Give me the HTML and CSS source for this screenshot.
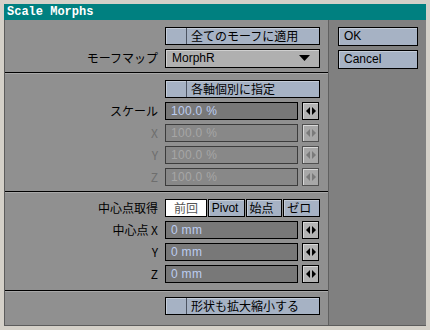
FILE: index.html
```html
<!DOCTYPE html>
<html lang="ja">
<head>
  <meta charset="UTF-8"/>
  <title>Scale Morphs</title>
  <link rel="stylesheet" href="styles.css">
</head>
<body>
  <div class="window">
    <div class="titlebar">Scale Morphs</div>
    <div class="body">
      <!-- Hauptbereich -->
      <div class="main">
        <div class="group g1">
          <div class="row">
            <span class="label"></span>
            <div class="btn check"><span class="box"></span><span class="txt">全てのモーフに適用</span></div>
          </div>
          <div class="row">
            <span class="label">モーフマップ</span>
            <div class="select">
              <span>MorphR</span>
              <svg width="11" height="6" viewBox="0 0 11 6"><polygon points="0,0 11,0 5.5,6" fill="#000"/></svg>
            </div>
          </div>
        </div>

        <div class="group g2">
          <div class="row">
            <span class="label"></span>
            <div class="btn check"><span class="box"></span><span class="txt">各軸個別に指定</span></div>
          </div>
          <div class="row">
            <span class="label">スケール</span>
            <div class="field">100.0 %</div>
            <div class="arrows"><svg width="10" height="8" viewBox="0 0 10 8"><polygon points="4,0 0,4 4,8" /><polygon points="6,0 10,4 6,8" /></svg></div>
          </div>
          <div class="row off">
            <span class="label">X</span>
            <div class="field">100.0 %</div>
            <div class="arrows"><svg width="10" height="8" viewBox="0 0 10 8"><polygon points="4,0 0,4 4,8" /><polygon points="6,0 10,4 6,8" /></svg></div>
          </div>
          <div class="row off">
            <span class="label">Y</span>
            <div class="field">100.0 %</div>
            <div class="arrows"><svg width="10" height="8" viewBox="0 0 10 8"><polygon points="4,0 0,4 4,8" /><polygon points="6,0 10,4 6,8" /></svg></div>
          </div>
          <div class="row off">
            <span class="label">Z</span>
            <div class="field">100.0 %</div>
            <div class="arrows"><svg width="10" height="8" viewBox="0 0 10 8"><polygon points="4,0 0,4 4,8" /><polygon points="6,0 10,4 6,8" /></svg></div>
          </div>
        </div>

        <div class="group g3">
          <div class="row">
            <span class="label">中心点取得</span>
            <div class="segs">
              <span class="seg on">前回</span>
              <span class="seg">Pivot</span>
              <span class="seg">始点</span>
              <span class="seg">ゼロ</span>
            </div>
          </div>
          <div class="row">
            <span class="label">中心点 X</span>
            <div class="field">0 mm</div>
            <div class="arrows"><svg width="10" height="8" viewBox="0 0 10 8"><polygon points="4,0 0,4 4,8" /><polygon points="6,0 10,4 6,8" /></svg></div>
          </div>
          <div class="row">
            <span class="label">Y</span>
            <div class="field">0 mm</div>
            <div class="arrows"><svg width="10" height="8" viewBox="0 0 10 8"><polygon points="4,0 0,4 4,8" /><polygon points="6,0 10,4 6,8" /></svg></div>
          </div>
          <div class="row">
            <span class="label">Z</span>
            <div class="field">0 mm</div>
            <div class="arrows"><svg width="10" height="8" viewBox="0 0 10 8"><polygon points="4,0 0,4 4,8" /><polygon points="6,0 10,4 6,8" /></svg></div>
          </div>
        </div>

        <div class="group g4">
          <div class="row">
            <span class="label"></span>
            <div class="btn check"><span class="box"></span><span class="txt">形状も拡大縮小する</span></div>
          </div>
        </div>
      </div>

      <!-- Seitenleiste -->
      <div class="side">
        <div class="btn plain">OK</div>
        <div class="btn plain">Cancel</div>
      </div>
    </div>
  </div>
</body>
</html>
```

FILE: styles.css
```css
body {
  margin: 0;
  font-family: "Noto Sans CJK JP", "Liberation Sans", sans-serif;
  font-size: 12px;
  background: #d4d0c8;
}

.window {
  width: 430px;
  height: 330px;
  box-sizing: border-box;
  padding: 4px 4px 4px 4px;
  background: #d4d0c8;
  display: flex;
  flex-direction: column;
}
.titlebar {
  height: 16px;
  flex-shrink: 0;
  background: #008080;
  color: #fff;
  font-family: "Liberation Mono", monospace;
  font-weight: bold;
  font-size: 12px;
  line-height: 16px;
  padding-left: 3px;
}
.body {
  flex: 1;
  display: flex;
  border-left: 1px solid #5c5c5c;
  border-bottom: 1px solid #5c5c5c;
}

.main {
  width: 323px;
  background: #909090;
  display: flex;
  flex-direction: column;
}
.side {
  flex: 1;
  background: #808080;
  border-left: 1px solid #606060;
  padding: 7px 0 0 9px;
  display: flex;
  flex-direction: column;
  gap: 4px;
}

.group {
  display: flex;
  flex-direction: column;
  gap: 4px;
  border-bottom: 1px solid #000;
  box-shadow: 0 1px 0 #a8a8a8;
  margin-bottom: 1px;
}
.g1 { padding: 7px 0 5px; }
.g2 { padding: 6px 0 5px; }
.g3 { padding: 6px 0 7px; }
.g4 { padding: 5px 0 0; border-bottom: none; box-shadow: none; }

.row {
  display: flex;
  align-items: center;
  height: 18px;
}
.label {
  width: 153px;
  padding-right: 7px;
  text-align: right;
  color: #000;
  line-height: 18px;
  flex-shrink: 0;
}
.row.off .label { color: #6e6e6e; }

.btn {
  box-sizing: border-box;
  height: 18px;
  background: #a6b2c4;
  border: 1px solid #000;
  box-shadow: inset 1px 1px 0 #c4ccd8;
  color: #000;
  line-height: 16px;
}
.btn.check {
  width: 155px;
  display: flex;
}
.btn .box {
  width: 20px;
  border-right: 1px solid #4c5462;
}
.btn .txt { padding-left: 4px; }
.btn.plain {
  width: 80px;
  height: 19px;
  padding-left: 5px;
  font-family: "Liberation Sans", sans-serif;
}

.select {
  box-sizing: border-box;
  width: 155px;
  height: 19px;
  background: #b0b0b0;
  border: 1px solid #000;
  box-shadow: inset 1px 1px 0 #d0d0d0;
  display: flex;
  align-items: center;
  justify-content: space-between;
  padding: 0 9px 0 6px;
  font-family: "Liberation Sans", sans-serif;
}

.field {
  box-sizing: border-box;
  width: 133px;
  height: 18px;
  background: #787878;
  border: 1px solid #000;
  color: #bccdf2;
  font-family: "Liberation Sans", sans-serif;
  font-size: 12px;
  letter-spacing: 0.3px;
  line-height: 16px;
  padding-left: 5px;
}
.row.off .field {
  background: #888;
  border-color: #3c3c3c;
  color: #a6a6a6;
}
.arrows {
  box-sizing: border-box;
  width: 17px;
  height: 18px;
  margin-left: 4px;
  background: #b4b4b4;
  border: 1px solid #000;
  box-shadow: inset 1px 1px 0 #d8d8d8;
  display: flex;
  align-items: center;
  justify-content: center;
}
.arrows svg { fill: #000; }
.row.off .arrows { background: #a8a8a8; border-color: #505050; }
.row.off .arrows svg { fill: #7a7a7a; }

.segs {
  width: 155px;
  display: flex;
  gap: 1px;
}
.seg {
  box-sizing: border-box;
  flex: 1;
  height: 18px;
  background: #a6b2c4;
  border: 1px solid #000;
  box-shadow: inset 1px 1px 0 #c4ccd8;
  line-height: 16px;
  padding-left: 3px;
}
.seg:nth-child(2) { font-family: "Liberation Sans", sans-serif; }
.seg.on {
  background: #fff;
  box-shadow: none;
  color: #555;
  padding-left: 8px;
}
```
